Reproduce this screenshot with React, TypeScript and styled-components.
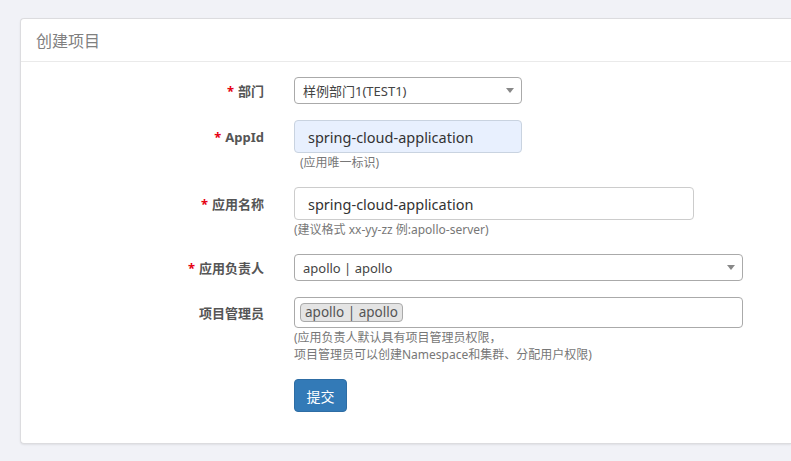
import React from 'react';
import styled, {createGlobalStyle} from 'styled-components';

const GlobalStyle = createGlobalStyle`
    html, body {
        margin: 0;
        padding: 0;
        background: #f1f2f7;
        font-family: "Noto Sans", "Noto Sans CJK SC", sans-serif;
        color: #333;
    }
`

const Page = styled.div`
    padding: 18px 0 0 20px;
    height: 443px;
    overflow: hidden;
`

const Panel = styled.div`
    background: #fff;
    border: 1px solid #dcdcdf;
    border-right: none;
    border-radius: 4px 0 0 4px;
    box-shadow: 0 1px 2px rgba(0, 0, 0, .08);
`

const PanelHeader = styled.div`
    height: 42px;
    display: flex;
    align-items: center;
    padding-left: 15px;
    border-bottom: 1px solid #eaeaea;
    font-size: 16px;
    color: #808080;
`

const PanelBody = styled.div`
    padding: 15px 0 31px;
`

const Row = styled.div<{ $gap?: number }>`
    display: grid;
    grid-template-columns: 243px 1fr;
    column-gap: 30px;
    margin-bottom: ${({$gap}) => $gap ?? 16}px;
`

const Label = styled.label<{ $h: number }>`
    height: ${({$h}) => $h}px;
    display: flex;
    align-items: center;
    justify-content: flex-end;
    font-size: 13px;
    font-weight: bold;
    color: #555;
`

const Star = styled.span`
    color: #e60012;
    margin-right: 4px;
`

const Field = styled.div`
    display: flex;
    flex-direction: column;
    align-items: flex-start;
`

const Select = styled.div<{ $w: number }>`
    box-sizing: border-box;
    width: ${({$w}) => $w}px;
    height: 27px;
    border: 1px solid #aaa;
    border-radius: 4px;
    display: flex;
    align-items: center;
    padding: 0 8px;
    font-size: 13px;
    color: #444;
    background: #fff;

    span {
        flex: 1;
    }
`

const Arrow = styled.i`
    width: 0;
    height: 0;
    border-left: 4px solid transparent;
    border-right: 4px solid transparent;
    border-top: 5px solid #888;
    margin-right: -1px;
`

const Input = styled.div<{ $w: number; $filled?: boolean }>`
    box-sizing: border-box;
    width: ${({$w}) => $w}px;
    height: 33px;
    border: 1px solid ${({$filled}) => $filled ? '#c9d3e0' : '#ccc'};
    border-radius: 4px;
    background: ${({$filled}) => $filled ? '#e8f0fe' : '#fff'};
    display: flex;
    align-items: center;
    padding: 0 13px;
    font-size: 14.5px;
    color: #333;
`

const TagBox = styled.div`
    box-sizing: border-box;
    width: 449px;
    height: 31px;
    border: 1px solid #aaa;
    border-radius: 4px;
    display: flex;
    align-items: center;
    padding: 0 5px;
`

const Tag = styled.span`
    box-sizing: border-box;
    height: 19px;
    border: 1px solid #aaa;
    border-radius: 4px;
    background: #e4e4e4;
    padding: 0 4px;
    font-size: 13.5px;
    line-height: 17px;
    color: #555;
`

const Hint = styled.div<{ $indent?: number }>`
    font-size: 12px;
    line-height: 17px;
    color: #777;
    margin-top: 1px;
    padding-left: ${({$indent}) => $indent ?? 0}px;
`

const Button = styled.button`
    width: 53px;
    height: 33px;
    border: 1px solid #2e6da4;
    border-radius: 4px;
    background: #337ab7;
    color: #fff;
    font-family: inherit;
    font-size: 14px;
    padding: 0;
`

const App: React.FC = () => {
    return (
        <>
            <GlobalStyle/>
            <Page>
                <Panel>
                    <PanelHeader>创建项目</PanelHeader>
                    <PanelBody>
                        <Row>
                            <Label $h={27}><Star>*</Star>部门</Label>
                            <Field>
                                <Select $w={228}><span>样例部门1(TEST1)</span><Arrow/></Select>
                            </Field>
                        </Row>
                        <Row $gap={16}>
                            <Label $h={33}><Star>*</Star>AppId</Label>
                            <Field>
                                <Input $w={228} $filled>spring-cloud-application</Input>
                                <Hint $indent={6}>(应用唯一标识)</Hint>
                            </Field>
                        </Row>
                        <Row $gap={16}>
                            <Label $h={33}><Star>*</Star>应用名称</Label>
                            <Field>
                                <Input $w={400}>spring-cloud-application</Input>
                                <Hint>(建议格式 xx-yy-zz 例:apollo-server)</Hint>
                            </Field>
                        </Row>
                        <Row>
                            <Label $h={27}><Star>*</Star>应用负责人</Label>
                            <Field>
                                <Select $w={449}><span>apollo | apollo</span><Arrow/></Select>
                            </Field>
                        </Row>
                        <Row>
                            <Label $h={31}>项目管理员</Label>
                            <Field>
                                <TagBox><Tag>apollo | apollo</Tag></TagBox>
                                <Hint>
                                    (应用负责人默认具有项目管理员权限，<br/>
                                    项目管理员可以创建Namespace和集群、分配用户权限)
                                </Hint>
                            </Field>
                        </Row>
                        <Row $gap={0}>
                            <span/>
                            <Field>
                                <Button>提交</Button>
                            </Field>
                        </Row>
                    </PanelBody>
                </Panel>
            </Page>
        </>
    );
};

export default App;
